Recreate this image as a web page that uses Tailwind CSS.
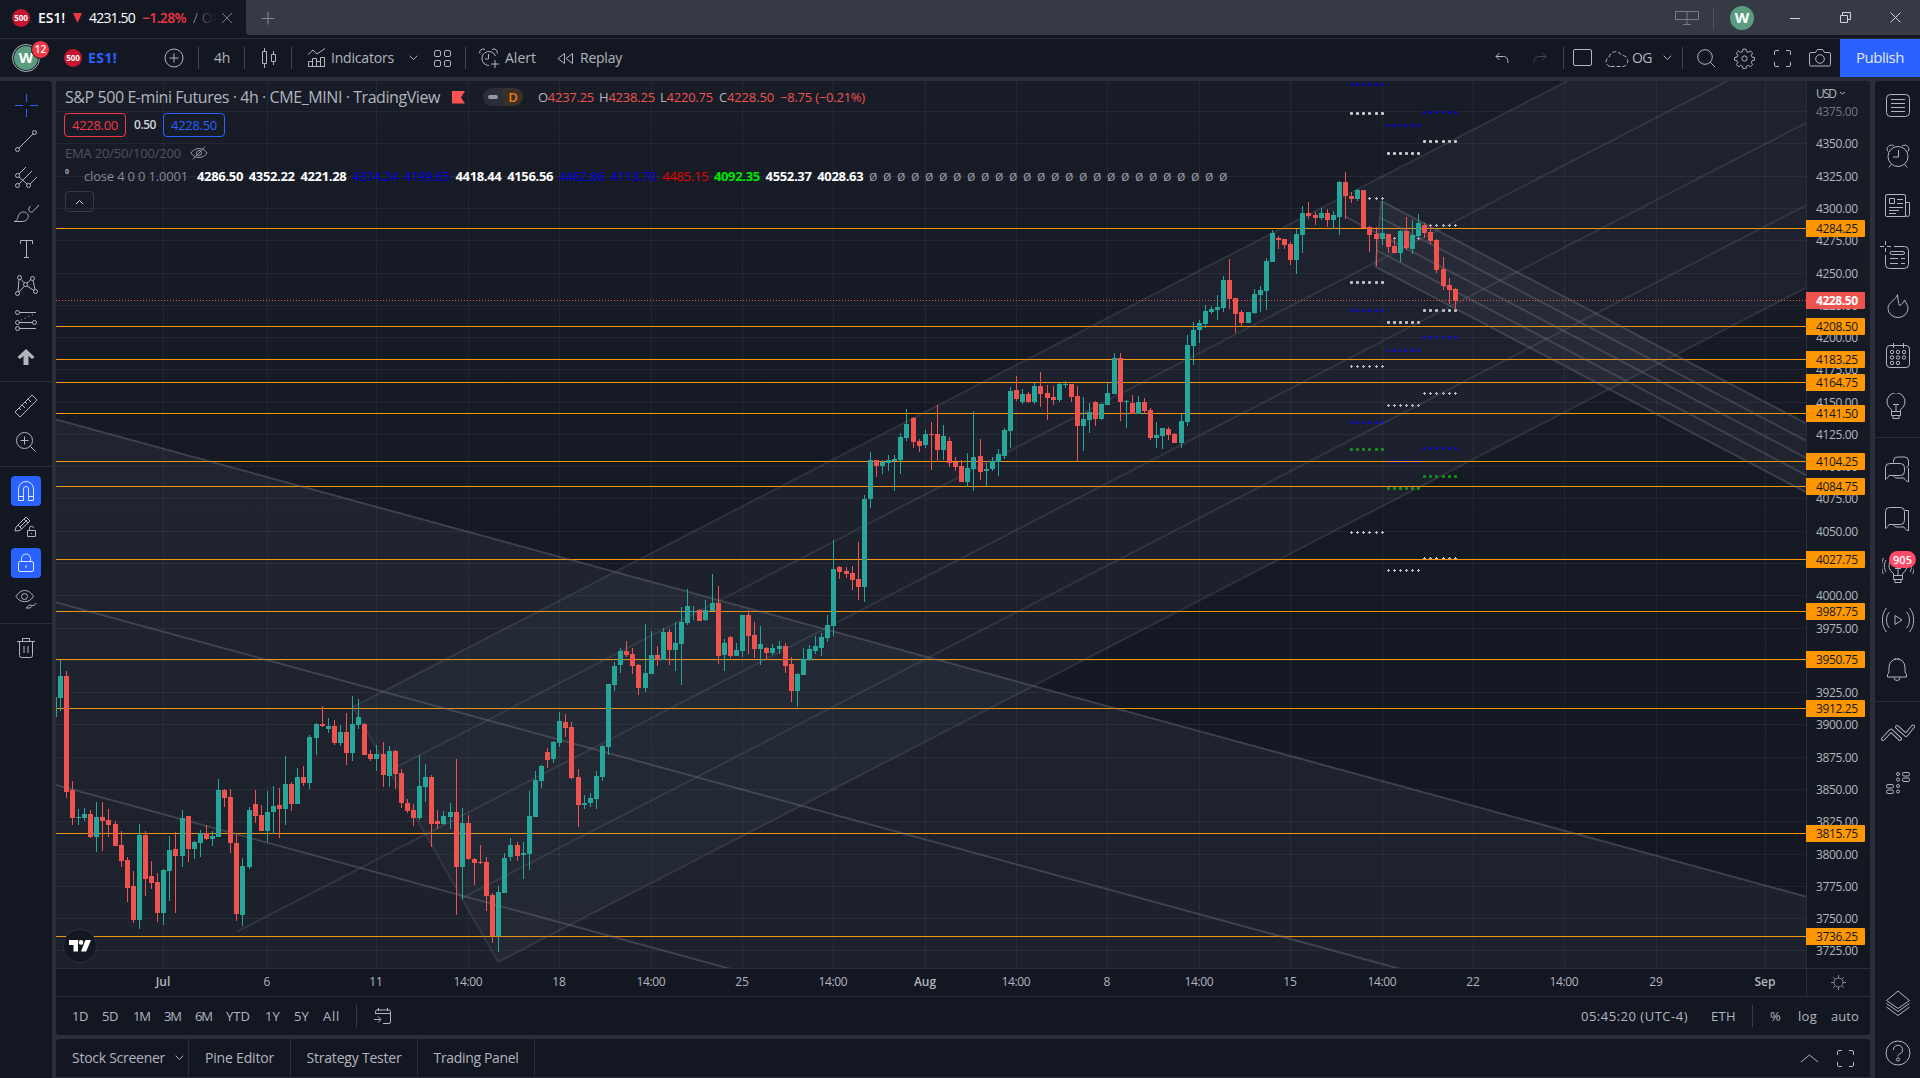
<!DOCTYPE html>
<html lang="en">
<head>
    <meta charset="UTF-8">
    <meta name="viewport" content="width=device-width, initial-scale=1.0">
    <title>ES1! 4231.50 −1.28%</title>
    <script src="https://cdn.jsdelivr.net/npm/@tailwindcss/browser@4"></script>
    <style>
        body {
            font-family: 'Trebuchet MS', 'Open Sans', sans-serif;
        }
        .ic {
            fill: none;
            stroke: currentColor;
            flex: none;
        }
        [data-w] {
            white-space: nowrap;
            flex: none;
        }
    </style>
</head>
<body class="w-[1920px] h-[1078px] overflow-hidden bg-[#2a2e39] text-[#b2b5be] text-sm flex flex-col">

    <!-- Window tabs -->
    <div class="h-[38px] bg-[#131722] flex items-start flex-none">
        <div class="w-[246px] h-[35px] pl-3 flex items-center flex-none text-[14px]">
            <span class="w-[18px] h-[18px] rounded-full bg-[#c8142f] text-white text-[8px] font-bold flex items-center justify-center flex-none">500</span>
            <span class="ml-2 text-white font-semibold" data-w="27">ES1!</span>
            <svg class="ml-[8px] flex-none" width="9" height="10"><path d="M0 0h9L4.500 10z" fill="#f23645"/></svg>
            <span class="ml-[7px] text-white font-medium" data-w="46">4231.50</span>
            <span class="ml-[7px] text-[#f23645] font-semibold" data-w="44">−1.28%</span>
            <span class="ml-[7px] w-[24px] overflow-hidden whitespace-nowrap bg-gradient-to-r from-[#868993] to-[#131722] bg-clip-text text-transparent">/ OG</span>
            <svg class="ic ml-[4px] text-[#787b86]" width="12" height="12"><path d="M1 1l10 10M11 1L1 11"/></svg>
        </div>
        <div class="flex-1 h-[35px] bg-[#363a45] rounded-bl flex items-center text-[#d1d4dc]">
            <svg class="ic ml-[15px] text-[#868993]" width="14" height="14"><path d="M7 .5v13M.5 7.500h13"/></svg>
            <svg class="ic ml-auto text-[#787b86]" width="24" height="16"><path d="M.5 1.500h23v8h-23zM12 1.500v13M8 14.500h8"/></svg>
            <div class="w-px h-[22px] bg-[#50535e] ml-[14px]"></div>
            <span class="ml-[16px] w-6 h-6 rounded-full bg-[#5b9c7f] text-white font-bold text-[15px] flex items-center justify-center">W</span>
            <svg class="ic ml-[36px]" width="10" height="10"><path d="M0 5.500h10"/></svg>
            <svg class="ic ml-[40px]" width="11" height="11"><path d="M.5 3.500h7v7h-7zM2.500 3V.5h8v7H8"/></svg>
            <svg class="ic ml-[39px] mr-[19px]" width="11" height="11"><path d="M.5.5l10 10M10.500.5l-10 10"/></svg>
        </div>
    </div>

    <!-- Top toolbar -->
    <div class="h-[39px] border-t border-[#2a2e39] bg-[#131722] flex items-center flex-none pl-3 text-[14px]">
        <div class="relative w-[28px] h-[28px] rounded-full border border-[#b2b5be] flex items-center justify-center flex-none">
            <span class="w-6 h-6 rounded-full bg-[#5b9c7f] text-white font-bold text-[15px] flex items-center justify-center">W</span>
            <span class="absolute -top-[5px] -right-[11px] w-[19px] h-[19px] rounded-full bg-[#f23645] border border-[#131722] text-white text-[10px] font-semibold flex items-center justify-center">12</span>
        </div>
        <span class="ml-6 w-[18px] h-[18px] rounded-full bg-[#c8142f] text-white text-[8px] font-bold flex items-center justify-center flex-none">500</span>
        <span class="ml-[6px] text-[#2962ff] font-bold" data-w="29">ES1!</span>
        <svg class="ic ml-[47px]" width="20" height="20"><circle cx="10" cy="10" r="9"/><path d="M10 5.500v9M5.500 10h9"/></svg>
        <div class="w-px h-[22px] bg-[#434651] ml-[14px]"></div>
        <span class="ml-[15px]" data-w="16">4h</span>
        <div class="w-px h-[22px] bg-[#434651] ml-[14px]"></div>
        <svg class="ic ml-[16px]" width="16" height="20"><path d="M1.500 3.500h4v12h-4zM3.500 0v3.500M3.500 15.500V20M10.500 6.500h4v7h-4zM12.500 3v3.500M12.500 13.500V17"/></svg>
        <div class="w-px h-[22px] bg-[#434651] ml-[14px]"></div>
        <svg class="ic ml-[15px]" width="20" height="20"><path d="M1 6.500l5-4.500 4 4 8-5.500M1.500 18.500v-5h4v5M5.500 18.500v-8h4v8M9.500 16.500v-3h4v5M13.500 18.500v-9h4v9zM1 18.500h17"/></svg>
        <span class="ml-[4px]" data-w="63">Indicators</span>
        <svg class="ic ml-[15px]" width="9" height="6"><path d="M.7.8l3.800 3.700L8.300.8"/></svg>
        <svg class="ic ml-[16px]" width="17" height="17"><rect x=".5" y=".5" width="6" height="6" rx="1.500"/><rect x="10.500" y=".5" width="6" height="6" rx="1.500"/><rect x=".5" y="10.500" width="6" height="6" rx="1.500"/><rect x="10.500" y="10.500" width="6" height="6" rx="1.500"/></svg>
        <div class="w-px h-[22px] bg-[#434651] ml-[14px]"></div>
        <svg class="ic ml-[13px]" width="21" height="21"><path d="M16.500 8A7 7 0 1 0 10 17.500M9.500 6v5H6M.8 5.500A3.500 3.500 0 0 1 6 1.500M13 1.500a3.500 3.500 0 0 1 5.200 4M16 12v8M12 16h8"/></svg>
        <span class="ml-[5px]" data-w="31">Alert</span>
        <svg class="ic ml-[21px]" width="17" height="13"><path d="M7.500 1.500v10L1 6.500zM15.500 1.500v10L9 6.500z" stroke-linejoin="round"/></svg>
        <span class="ml-[6px]" data-w="42">Replay</span>

        <svg class="ic ml-auto" width="14" height="12"><path d="M4.500 1L1 4.500 4.500 8M1 4.500h7.500c3 0 4.500 2 4.500 6.500"/></svg>
        <svg class="ic ml-[24px] text-[#434651]" width="14" height="12"><path d="M9.500 1L13 4.500 9.500 8M13 4.500H5.500C2.500 4.500 1 6.500 1 11"/></svg>
        <div class="w-px h-[22px] bg-[#434651] ml-[16px]"></div>
        <svg class="ic ml-[9px]" width="20" height="18"><rect x=".5" y=".5" width="18" height="16" rx="1.500"/></svg>
        <svg class="ic ml-[11px]" width="25" height="17"><path d="M6 16.500a5 5 0 0 1-.8-9.500A6.500 6.500 0 0 1 17.500 5.500 5.500 5.500 0 0 1 19 16.500z" stroke-dasharray="4 2"/></svg>
        <span class="ml-[3px]" data-w="20">OG</span>
        <svg class="ic ml-[11px]" width="9" height="6"><path d="M.7.8l3.800 3.700L8.300.8"/></svg>
        <div class="w-px h-[22px] bg-[#434651] ml-[10px]"></div>
        <svg class="ic ml-[14px]" width="19" height="19"><circle cx="8" cy="8" r="7.300"/><path d="M13.200 13.200l5 5"/></svg>
        <svg class="ic ml-[18px]" width="21" height="21" viewBox="0 0 28 28" stroke-width="1.300"><circle cx="14" cy="14" r="3.500"/><path d="M12 1.500h4l.8 3.300 2.300 1 2.900-1.800 2.800 2.800-1.800 2.900 1 2.300 3.300.8v3.400l-3.300.8-1 2.300 1.800 2.900-2.800 2.800-2.900-1.800-2.300 1-.8 3.300h-4l-.8-3.300-2.300-1L6 25l-2.800-2.800L5 19.300l-1-2.300-3.300-.8v-3.400L4 12l1-2.300-1.800-2.900L6 4l2.900 1.800 2.300-1z"/></svg>
        <svg class="ic ml-[19px]" width="17" height="17"><path d="M.5 5V2A1.500 1.500 0 0 1 2 .5h3M12 .5h3A1.500 1.500 0 0 1 16.500 2v3M16.500 12v3a1.500 1.500 0 0 1-1.500 1.500h-3M5 16.500H2A1.500 1.500 0 0 1 .5 15v-3"/></svg>
        <svg class="ic ml-[18px]" width="22" height="18"><path d="M2 3.500h4.500L8.500.5h5l2 3H20A1.500 1.500 0 0 1 21.500 5v10.500A1.500 1.500 0 0 1 20 17H2a1.500 1.500 0 0 1-1.500-1.500V5A1.500 1.500 0 0 1 2 3.500z"/><circle cx="11" cy="10" r="4.300"/></svg>
        <div class="ml-[9px] w-[80px] h-[38px] bg-[#2962ff] text-[#e3e8f8] text-[15px] flex items-center justify-center flex-none"><span data-w="48">Publish</span></div>
    </div>

    <div class="flex flex-1 pt-1 min-h-0">
        <!-- Drawing tools -->
        <div class="w-[52px] bg-[#131722] rounded-tr flex-none pt-[6px] flex flex-col">
            <div class="h-9 flex items-center justify-center text-[#2962ff]"><svg class="ic" width="24" height="24"><path d="M12.500 1v8M12.500 16v8M1 12.500h8M16 12.500h8"/></svg></div>
            <div class="h-9 flex items-center justify-center"><svg class="ic" width="24" height="24"><circle cx="3.500" cy="20.500" r="2"/><circle cx="20.500" cy="3.500" r="2"/><path d="M5 19L19 5"/></svg></div>
            <div class="h-9 flex items-center justify-center"><svg class="ic" width="24" height="24"><circle cx="3.500" cy="10.500" r="2"/><circle cx="3.500" cy="20.500" r="2"/><circle cx="14.500" cy="20.500" r="2"/><path d="M5 9l7-7M5 12l8 7M5 19L18 6M16 19l7-7"/></svg></div>
            <div class="h-9 flex items-center justify-center"><svg class="ic" width="26" height="24"><path d="M1 20.500c4-.5 3-3 5-7 1.500-2.500 5-3.500 7.500-1.500s2 5 .5 6.500c-2 2-4 2-6 2zM16 7c-1 4 2 5 4 3.500L26 4M16 7l1.500-2"/></svg></div>
            <div class="h-9 flex items-center justify-center"><svg class="ic" width="24" height="24"><path d="M6.500 7V3.500h12V7M12.500 3.500v17M10 20.500h5"/></svg></div>
            <div class="h-9 flex items-center justify-center"><svg class="ic" width="24" height="24"><circle cx="5.500" cy="4.500" r="2"/><circle cx="3.500" cy="20.500" r="2"/><circle cx="11.500" cy="11.500" r="2"/><circle cx="18.500" cy="5.500" r="2"/><circle cx="21.500" cy="18.500" r="2"/><path d="M5 6.500L4 18.500M6.500 6l4 4M13 10l4-3.500M19 7.500l2 9M5 19l5.500-6M13 13l7 4.500"/></svg></div>
            <div class="h-9 flex items-center justify-center"><svg class="ic" width="24" height="24"><circle cx="3.500" cy="3.500" r="2"/><circle cx="3.500" cy="13.500" r="2"/><circle cx="20.500" cy="13.500" r="2"/><circle cx="3.500" cy="19.500" r="2"/><path d="M5.500 3.500H22M5.500 13.500h13M5.500 19.500H22"/><path d="M7 11l13-6" stroke-dasharray="1 3"/></svg></div>
            <div class="h-9 flex items-center justify-center"><svg width="18" height="18" fill="currentColor"><path d="M9 1l8.500 8-2.500 2-3.500-3v9h-5V8L3 11 .5 9z"/></svg></div>
            <div class="h-px bg-[#2a2e39] my-[6px]"></div>
            <div class="h-9 flex items-center justify-center"><svg class="ic" width="24" height="24"><path d="M1 18L18 1l5 5L6 23zM5 14l2 2M8 11l3 3M11 8l2 2M14 5l3 3"/></svg></div>
            <div class="h-9 flex items-center justify-center"><svg class="ic" width="22" height="22"><circle cx="9.500" cy="9.500" r="8"/><path d="M15.500 15.500l5 5M9.500 5.500v8M5.500 9.500h8"/></svg></div>
            <div class="h-px bg-[#2a2e39] my-[6px]"></div>
            <div class="h-9 flex items-center justify-center"><span class="w-[30px] h-[30px] rounded bg-[#2962ff] flex items-center justify-center"><svg class="ic text-[#dbe3ff]" width="18" height="22"><path d="M1.500 20.500V9a7.500 7.500 0 0 1 15 0v11.500h-5V9a2.500 2.500 0 0 0-5 0v11.500zM1.500 16.500h5M11.500 16.500h5"/></svg></span></div>
            <div class="h-9 flex items-center justify-center"><svg class="ic" width="24" height="24"><path d="M1 16l1-4L12 2l4 4L6 15.500zM4 10l4 4M6 12l7-7M10 4l4 4M13.500 15.500h8v6h-8zM15.500 15.500v-2a2 2 0 0 1 4-.5M17.500 18v1"/></svg></div>
            <div class="h-9 flex items-center justify-center"><span class="w-[30px] h-[30px] rounded bg-[#2962ff] flex items-center justify-center"><svg class="ic text-[#dbe3ff]" width="18" height="20"><rect x="1.500" y="8.500" width="15" height="10" rx="1.500"/><path d="M4.500 8.500V5.500a4.500 4.500 0 0 1 9 0v3M9 12v3"/></svg></span></div>
            <div class="h-9 flex items-center justify-center"><svg class="ic" width="24" height="24"><path d="M2 9.500c4.500-8 13-8 17.500 0-4.500 7-13 7-17.500 0z"/><circle cx="10.500" cy="9.500" r="3"/><path d="M12 21c2 0 1.500-3 4-3s2 3-1 3zM18 17.500c0 2 2 1.500 4.500-1.500"/></svg></div>
            <div class="h-px bg-[#2a2e39] my-[6px]"></div>
            <div class="h-9 flex items-center justify-center"><svg class="ic" width="20" height="22"><path d="M1 4.500h18M6.500 4.500v-3h7v3M3.500 4.500v14a2 2 0 0 0 2 2h9a2 2 0 0 0 2-2v-14M8 9v7M12 9v7"/></svg></div>
        </div>

        <div class="w-[1814px] ml-1 flex flex-col flex-none">
            <!-- Chart -->
            <div class="relative h-[915px] rounded-t overflow-hidden bg-[#131722]">
                <svg id="chart" class="block" width="1814" height="915" viewBox="56 81 1814 915"></svg>

                <!-- Legend -->
                <div class="absolute top-[3px] left-[8px] text-[13px]">
                    <div class="h-[26px] flex items-center">
                        <span class="text-[16px] ml-px" data-w="375">S&amp;P 500 E-mini Futures · 4h · CME_MINI · TradingView</span>
                        <svg class="ml-[12px] flex-none" width="13" height="13"><path d="M0 0h13l-4 6.500 4 6H0z" fill="#ff5252"/></svg>
                        <div class="ml-[18px] w-[40px] h-[18px] rounded-full overflow-hidden flex flex-none">
                            <span class="w-1/2 bg-[#2a2e39] flex items-center justify-center"><i class="w-[10px] h-1 rounded-full bg-[#9598a1]"></i></span>
                            <span class="w-1/2 bg-[#3b2f2a] text-[#f57c00] font-semibold text-[13px] flex items-center justify-center">D</span>
                        </div>
                        <span class="ml-[15px]" data-w="56">O<b class="font-normal text-[#ef5350]">4237.25</b></span>
                        <span class="ml-[5px]" data-w="56">H<b class="font-normal text-[#ef5350]">4238.25</b></span>
                        <span class="ml-[5px]" data-w="53">L<b class="font-normal text-[#ef5350]">4220.75</b></span>
                        <span class="ml-[6px]" data-w="55">C<b class="font-normal text-[#ef5350]">4228.50</b></span>
                        <span class="ml-[6px] text-[#ef5350]" data-w="85">−8.75 (−0.21%)</span>
                    </div>
                    <div class="mt-[3px] h-[24px] flex items-center">
                        <span class="w-[62px] h-[24px] rounded border border-[#f23645] text-[#f23645] flex items-center justify-center"><span data-w="46">4228.00</span></span>
                        <span class="ml-[8px] text-[12px] text-[#d1d4dc] font-semibold" data-w="22">0.50</span>
                        <span class="ml-[7px] w-[62px] h-[24px] rounded border border-[#2962ff] text-[#2962ff] flex items-center justify-center"><span data-w="46">4228.50</span></span>
                    </div>
                    <div class="mt-[4px] h-[24px] flex items-center">
                        <span class="ml-px text-[#50535e]" data-w="116">EMA 20/50/100/200</span>
                        <svg class="ic ml-[9px] text-[#9598a1]" width="18" height="14"><path d="M1 7c3.500-6 12.500-6 16 0-3.500 6-12.500 6-16 0zM3 13.500L15 .5"/><circle cx="9" cy="7" r="2.500"/></svg>
                    </div>
                    <div id="values" class="h-[22px] flex items-center">
                        <span class="ml-px w-[19px] text-[11px] font-semibold -mt-1 flex-none">⁰</span>
                        <span class="text-[#868993] mr-[9px]" data-w="104">close 4 0 0 1.0001</span>
                    </div>
                    <div class="mt-[4px] ml-px w-[29px] h-[21px] rounded-sm border border-[#363a45] flex items-center justify-center"><svg class="ic text-[#d1d4dc]" width="9" height="6"><path d="M1 5l3.500-3.500L8 5"/></svg></div>
                </div>

                <!-- Logo -->
                <div class="absolute left-[7px] top-[848px] w-[34px] h-[34px] rounded-full bg-[#131722] border border-[#2a2e39] flex items-center justify-center">
                    <svg width="22" height="12" fill="#fff"><path d="M0 0h9v11.500H4.500V5H0z"/><circle cx="12" cy="2.400" r="2.300"/><path d="M16.500 0H22l-4.800 11.500H12z"/></svg>
                </div>
            </div>

            <!-- Ranges -->
            <div class="h-[39px] border-t border-[#2a2e39] bg-[#131722] rounded-b flex items-center pl-4 text-[13px] flex-none">
                <span data-w="16">1D</span>
                <span class="ml-[14px]" data-w="16">5D</span>
                <span class="ml-[15px]" data-w="17">1M</span>
                <span class="ml-[14px]" data-w="17">3M</span>
                <span class="ml-[14px]" data-w="17">6M</span>
                <span class="ml-[14px]" data-w="24">YTD</span>
                <span class="ml-[15px]" data-w="15">1Y</span>
                <span class="ml-[14px]" data-w="15">5Y</span>
                <span class="ml-[14px]" data-w="17">All</span>
                <div class="w-px h-[22px] bg-[#363a45] ml-[16px]"></div>
                <svg class="ic ml-[17px]" width="17" height="17"><path d="M1.500 6V3.500A1.500 1.500 0 0 1 3 2h12a1.500 1.500 0 0 1 1.500 1.500V14A1.500 1.500 0 0 1 15 15.500H9M1.500 5.500h15M4.500 0v3M13.500 0v3M0 11.500h6.500M4 8.500l3 3-3 3"/></svg>
                <span class="ml-auto" data-w="107">05:45:20 (UTC-4)</span>
                <span class="ml-[23px]" data-w="25">ETH</span>
                <div class="w-px h-[22px] bg-[#363a45] ml-[16px]"></div>
                <span class="ml-[17px]" data-w="12">%</span>
                <span class="ml-[16px]" data-w="19">log</span>
                <span class="ml-[14px] mr-[11px]" data-w="28">auto</span>
            </div>

            <!-- Bottom panels -->
            <div class="mt-1 mb-px flex-1 bg-[#131722] rounded-t flex items-center text-[14px]">
                <div class="w-[133px] h-full pl-4 border-r border-[#2a2e39] flex items-center"><span data-w="93">Stock Screener</span><svg class="ic ml-[10px]" width="9" height="6"><path d="M.7.8l3.800 3.700L8.300.8"/></svg></div>
                <div class="w-[102px] h-full border-r border-[#2a2e39] flex items-center justify-center"><span data-w="69">Pine Editor</span></div>
                <div class="w-[127px] h-full border-r border-[#2a2e39] flex items-center justify-center"><span data-w="95">Strategy Tester</span></div>
                <div class="w-[117px] h-full border-r border-[#2a2e39] flex items-center justify-center"><span data-w="85">Trading Panel</span></div>
                <svg class="ic ml-auto" width="19" height="9"><path d="M1 8l8.500-7L18 8"/></svg>
                <svg class="ic ml-[18px] mr-[16px]" width="17" height="17"><path d="M.5 5V2A1.500 1.500 0 0 1 2 .5h3M12 .5h3A1.500 1.500 0 0 1 16.500 2v3M16.500 12v3a1.500 1.500 0 0 1-1.500 1.500h-3M5 16.500H2A1.500 1.500 0 0 1 .5 15v-3"/></svg>
            </div>
        </div>

        <!-- Widget bar -->
        <div class="w-[45px] ml-[5px] bg-[#131722] rounded-tl flex-none flex flex-col">
            <div class="h-[50px] flex items-center justify-center"><svg class="ic" width="24" height="24"><rect x=".5" y=".5" width="23" height="22" rx="4"/><path d="M5 5.500h14M5 9.500h14M5 13.500h14M5 17.500h14"/></svg></div>
            <div class="h-[50px] flex items-center justify-center"><svg class="ic" width="26" height="26"><circle cx="13" cy="13.500" r="10"/><path d="M13.500 7v7H8M3 8.500C0 5 5 0 9 3M23 8.500C26 5 21 0 17 3M6 21.500l-2 3M20 21.500l2 3"/></svg></div>
            <div class="h-[50px] flex items-center justify-center"><svg class="ic" width="26" height="24"><path d="M.5 22V2A1.500 1.500 0 0 1 2 .5h17A1.500 1.500 0 0 1 20.500 2v20.500h-19a1 1 0 0 1-1-1zM21 8.500h3.500v12a2 2 0 0 1-4 0M4.500 4.500h5v5h-5zM12 5.500h6M12 9.500h6M4 13.500h14M4 16.500h10M4 19.500h7"/></svg></div>
            <div class="h-[50px] flex items-center justify-center"><svg class="ic mr-[5px] -mt-[2px]" width="30" height="28"><path d="M5.500 0v4M5.500 7v4M0 5.500h4M7 5.500h4M14 5.500h10.500a4 4 0 0 1 4 4v14a4 4 0 0 1-4 4h-15a4 4 0 0 1-4-4V14M10 17.500h8M10 22.500h8M21 17.500h4M21 22.500h4"/><rect x="10" y="10.500" width="14.500" height="3" rx="1.500"/></svg></div>
            <div class="h-[50px] flex items-center justify-center"><svg class="ic" width="24" height="26"><path d="M11.500 1.500C11 6 2 9 2 15.500a10 9 0 0 0 20 0c0-3-1.500-4.500-3.500-8.500-1 2.500-2 4-5 5.500-1-2-1.500-6-2-11z"/></svg></div>
            <div class="h-[50px] flex items-center justify-center"><svg class="ic" width="24" height="26"><rect x=".5" y="2.500" width="23" height="22" rx="3.500"/><path d="M7.500 0v5M17.500 0v5"/><g><circle cx="6" cy="9" r="1.700"/><circle cx="12" cy="9" r="1.700"/><circle cx="18" cy="9" r="1.700"/><circle cx="6" cy="14.500" r="1.700"/><circle cx="12" cy="14.500" r="1.700"/><circle cx="18" cy="14.500" r="1.700"/><circle cx="6" cy="20" r="1.700"/><circle cx="12" cy="20" r="1.700"/></g></svg></div>
            <div class="h-[50px] flex items-center justify-center"><svg class="ic mr-[3px]" width="20" height="27"><path d="M5.500 18.500v-2A9 9 0 1 1 14.500 16.500v2zM5.500 18.500v4h9v-4M7 22.500v3h6v-3M7 11.500h6M10 11.500v7"/></svg></div>
            <div class="h-px bg-[#2a2e39] mt-[6px] mb-[7px]"></div>
            <div class="h-[50px] flex items-center justify-center"><svg class="ic" width="25" height="28"><path d="M8.500 6.500V5a4 4 0 0 1 4-4h7a4 4 0 0 1 4 4v4a3 3 0 0 1-2 2.500M4.500 7.500h11a4 4 0 0 1 4 4v4a4 4 0 0 1-4 4H4c-1 2-2 3-3.500 4v-12a4 4 0 0 1 4-4zM9 19.500c0 1.500 1 2.500 3 2.500h7c1 2 3 3.500 4.500 4V12"/></svg></div>
            <div class="h-[50px] flex items-center justify-center"><svg class="ic -mt-[3px]" width="25" height="25"><path d="M4.500 1.500h11a4 4 0 0 1 4 4v9a4 4 0 0 1-4 4H4c-1 2-2 3-3.500 4v-17a4 4 0 0 1 4-4zM20 4.500h3.500V25c-2-.5-3.500-2-4.500-4h-7c-2 0-3-1-3-2.500"/></svg></div>
            <div class="relative h-[50px] flex items-center justify-center"><svg class="ic" width="32" height="28"><path d="M11.500 19.500v-2A9 9 0 1 1 20.500 17.500v2zM11.500 19.500v4h9v-4M13 23.500v3h6v-3M13 12.500h6M16 12.500v7M4 4c-2 3-2 9 0 12M1.500 2c-2.500 4-2.500 12 0 16M28 4c2 3 2 9 0 12M30.500 2c2.500 4 2.500 12 0 16"/></svg>
                <span class="absolute top-[6px] left-[14px] w-[27px] h-[17px] rounded-full bg-[#ff4a68] text-white text-[11px] font-semibold flex items-center justify-center">905</span></div>
            <div class="h-[50px] flex items-center justify-center"><svg class="ic" width="32" height="26"><path d="M13 8.500v9l7-4.500zM7.500 5c-4 4-4 12 0 16M4.500 1c-5.500 6-5.500 18 0 24M24.500 5c4 4 4 12 0 16M27.500 1c5.500 6 5.500 18 0 24"/></svg></div>
            <div class="h-[50px] flex items-center justify-center"><svg class="ic mr-[2px]" width="22" height="24"><path d="M1.500 16.500c2-1.500 1.500-5 1.500-7.500a8 8 0 0 1 16 0c0 2.500-.5 6 1.500 7.500v2.500h-19zM8 19.500a3 3 0 0 0 6 0M9 1.500a2 2 0 0 1 4 0"/></svg></div>
            <div class="h-px bg-[#2a2e39] my-[6px]"></div>
            <div class="h-[50px] flex items-center justify-center"><svg class="ic" width="34" height="20"><path d="M2 16l8-8.500 9 8.500" stroke-width="4" stroke-linecap="round" stroke-linejoin="round"/><path d="M16 4l9 8 7-8.500" stroke-width="4" stroke-linecap="round" stroke-linejoin="round"/><g stroke="#131722" stroke-width="2" stroke-linecap="round" stroke-linejoin="round"><path d="M2 16l8-8.500 9 8.500M16 4l9 8 7-8.500"/></g></svg></div>
            <div class="h-[50px] flex items-center justify-center"><svg class="ic" width="24" height="24"><circle cx="12" cy="3" r="1.500"/><circle cx="12" cy="8.500" r="1.500"/><circle cx="12" cy="15" r="1.500"/><circle cx="12" cy="20.500" r="1.500"/><rect x="16.500" y="1.500" width="7" height="3.500" rx="1.500"/><rect x="16.500" y="7" width="7" height="3.500" rx="1.500"/><rect x=".5" y="13.500" width="7" height="3.500" rx="1.500"/><rect x=".5" y="19" width="7" height="3.500" rx="1.500"/></svg></div>
            <div class="mt-auto h-[50px] flex items-center justify-center"><svg class="ic" width="24" height="27"><path d="M12 1l11.500 9.500L12 18.500.5 10.500zM.5 13.500L12 21.500l11.500-8M.5 17L12 25.500 23.500 17"/></svg></div>
            <div class="h-[50px] flex items-center justify-center"><svg class="ic" width="26" height="26"><circle cx="13" cy="13" r="12"/><path d="M8.500 10a4.500 4.500 0 1 1 6 4c-1 .5-1.500 1-1.500 2.500"/><circle cx="13" cy="19.500" r="1.600"/></svg></div>
        </div>
    </div>

    <script>
        // each candle: direction, high, body top, body bottom, low
        const candles = `u697,697,717,717 u660,676,698,711 d671,676,792,798 d781,790,818,825 u809,817,818,825 u808,814,818,821 d810,814,837,838 u802,817,837,852
            d802,817,821,851 d809,820,825,837 d821,824,846,846 d831,845,861,867 d857,860,888,902 d871,886,920,923 u824,835,920,929 d831,835,879,896
            d861,876,883,889 d873,882,913,922 u869,870,913,925 u836,850,871,901 d832,849,856,913 u810,818,856,867 d816,816,849,862 u841,842,849,859
            u830,833,843,857 d825,833,839,840 u831,836,839,846 u779,790,837,837 d789,790,798,807 d789,797,843,853 d835,843,914,921 u858,866,915,926
            u807,810,867,869 d790,804,816,823 d805,815,831,831 u791,812,831,842 u786,806,812,834 d788,805,809,838 u756,784,809,825 d782,784,804,811
            u768,777,804,804 d766,777,783,786 u735,737,783,789 u723,724,738,755 d706,724,726,727 u718,726,729,733 d720,726,743,745 u725,732,743,746
            d713,732,753,765 u696,724,753,761 u699,717,725,729 d723,724,755,755 d750,754,759,761 u745,754,759,771 d742,754,775,787 u746,751,776,787
            d750,751,774,789 d769,773,803,808 d799,803,811,813 d804,810,818,826 u755,786,818,820 u764,777,787,802 d775,777,824,847 d810,821,824,829
            u811,816,824,825 u803,812,817,829 d759,812,867,915 u808,823,867,899 d815,823,859,860 d858,859,863,885 d845,862,863,864 d857,862,896,911
            d893,895,936,943 u886,892,936,952 u853,858,893,893 u838,845,857,861 d842,845,856,861 u842,853,855,879 u791,816,854,870 u771,780,817,817
            u765,766,781,788 d748,752,760,768 u741,742,759,763 u712,721,743,747 d714,722,728,737 d722,727,778,779 d769,777,805,827 u795,803,805,809
            u793,798,803,807 u771,776,799,809 u745,746,777,781 u684,684,747,755 u662,666,685,691 u648,651,665,673 d641,651,655,657 d648,654,666,674
            d664,665,688,695 u624,673,688,692 u631,655,674,674 d646,655,660,666 u628,632,660,660 d629,632,650,665 u622,643,650,671 u607,622,644,685
            u589,606,623,625 u606,611,612,620 d609,610,621,621 u600,610,620,621 u574,603,611,611 d586,603,656,664 u639,643,655,671 d636,637,656,658
            u643,650,656,656 u615,615,651,657 d610,615,636,654 d622,635,649,658 u626,644,649,665 d647,648,653,660 u644,648,653,655 u641,646,649,654
            d643,646,666,673 d657,664,691,702 u673,674,691,707 u648,659,675,675 u645,649,660,661 u636,646,651,654 u633,637,648,656 u615,625,638,642
            u540,569,626,636 d566,567,572,579 d567,571,574,578 d566,573,580,590 d542,579,587,600 u495,499,587,602 u452,460,499,508 d460,460,466,477
            u460,462,466,474 u455,460,463,471 u455,459,461,491 u433,437,460,474 u409,424,438,441 d417,418,442,448 d439,441,446,452 u430,434,445,448
            d422,434,435,470 d405,434,450,462 u425,436,450,460 d437,441,463,467 d457,462,467,471 d460,466,482,482 u453,468,482,487 u411,457,469,491
            d439,456,472,480 u463,469,471,486 u457,461,469,471 u449,454,462,476 u428,430,456,459 u387,391,431,448 d376,390,399,401 u389,394,402,404
            d392,394,402,403 u383,386,402,404 d372,386,394,407 d385,393,398,420 d386,397,400,405 u383,384,400,402 u381,384,385,388 d384,384,397,402
            d386,396,426,461 u397,419,426,451 u403,412,420,433 d401,402,419,426 u403,404,419,420 u383,393,405,405 u353,358,394,394 d353,358,402,421
            u400,401,402,428 d395,403,414,414 u396,402,414,414 d398,402,411,414 d408,410,438,440 u422,435,438,448 u428,428,436,449 d427,429,435,440
            d433,434,443,443 u414,421,443,448 u335,345,422,426 u322,330,346,365 u320,323,330,343 u305,311,324,328 u306,309,312,314 u295,307,310,320
            u276,280,308,312 d259,280,299,309 d298,298,314,333 d310,312,323,326 u312,312,323,323 u289,294,313,314 u286,290,295,312 u258,261,291,310
            u230,233,262,262 d236,238,240,249 d239,239,245,249 d242,244,260,265 u229,234,260,274 u206,213,235,253 d202,213,216,219 d212,215,218,225
            u208,213,218,220 d209,213,220,227 u211,215,220,229 u181,182,217,235 d172,182,196,219 d192,196,199,203 u189,190,199,201 d190,190,228,228
            d226,227,235,252 d227,234,239,266 u201,233,239,245 d234,234,247,253 d239,246,253,253 u230,231,253,262 d217,231,248,250 u220,235,249,254
            u214,223,236,238 d223,225,233,238 d227,232,241,244 d239,240,270,273 d257,269,286,290 d278,285,290,304 d288,289,301,310`.trim().split(/\s+/);

        // horizontal levels: price, y
        const levels = [[4284.25, 228], [4208.50, 326], [4183.25, 359], [4164.75, 382], [4141.50, 413], [4104.25, 461], [4084.75, 486],
            [4027.75, 559], [3987.75, 611], [3950.75, 659], [3912.25, 708], [3815.75, 833], [3736.25, 936]];
        const times = [[163, 'Jul'], [267, '6'], [376, '11'], [468, '14:00'], [559, '18'], [651, '14:00'], [742, '25'], [833, '14:00'], [925, 'Aug'],
            [1016, '14:00'], [1107, '8'], [1199, '14:00'], [1290, '15'], [1382, '14:00'], [1473, '22'], [1564, '14:00'], [1656, '29'], [1765, 'Sep']];

        // pivots: y, kind, first bar, skipped bars
        const pivots = [
            [84, 'blue', 212], [113, 'big', 212], [198, 'small', 212, [212, 213, 214]], [282, 'big', 212], [310, 'blue', 212], [366, 'small', 212], [422, 'blue', 212], [449, 'green', 212], [532, 'small', 212],
            [125, 'blue', 218], [153, 'big', 218], [238, 'small', 218, [218, 220, 221, 222]], [322, 'big', 218], [350, 'blue', 218], [405, 'small', 218], [461, 'blue', 218], [488, 'green', 218], [570, 'small', 218],
            [112, 'blue', 224], [141, 'big', 224], [225, 'small', 224, [224]], [310, 'big', 224], [337, 'blue', 224], [393, 'small', 224], [448, 'blue', 224], [476, 'green', 224], [558, 'small', 224]
        ];

        const barX = i => Math.floor(60.214 + 6.09162 * i);
        const priceY = p => Math.round(143.4 + (4350 - p) * 1.2912);
        const rect = (x, y, w, h, fill) => `<rect x="${x}" y="${y}" width="${w}" height="${h}" fill="${fill}"/>`;
        const line = (x1, y1, x2, y2, c) => `<path d="M${x1} ${y1}L${x2} ${y2}" stroke="${c}" stroke-width="2" fill="none"/>`;
        const tag = (p, y, bg, fg, w) => `<path d="M1806 ${y - 8}h58a1 1 0 0 1 1 1v15a1 1 0 0 1 -1 1h-58z" fill="${bg}"/>
            <text x="1816" y="${y + 5}" fill="${fg}" font-weight="${w}" textLength="42">${p.toFixed(2)}</text>`;

        let s = `<defs>
            <linearGradient id="bg" x1="0" y1="0" x2="0" y2="1"><stop offset="0" stop-color="#181c27"/><stop offset="1" stop-color="#131722"/></linearGradient>
            <clipPath id="pane"><rect x="56" y="81" width="1750" height="887"/></clipPath></defs>`;
        s += rect(56, 81, 1814, 887, 'url(#bg)') + '<g clip-path="url(#pane)">';
        for (let p = 4375; p >= 3725; p -= 25) s += rect(56, priceY(p), 1750, 1, '#f0f3fa0f');
        times.forEach(t => s += rect(t[0], 81, 1, 887, '#f0f3fa0f'));

        pivots.forEach(([y, kind, from, skip = []]) => {
            for (let i = from; i < from + 6; i++) {
                if (skip.includes(i)) continue;
                const x = barX(i);
                if (kind === 'small') s += rect(x - 1, y, 3, 1, '#c4c6cb') + rect(x, y - 1, 1, 3, '#c4c6cb');
                if (kind === 'big') s += `<rect x="${x - 1}" y="${y - 1}" width="3" height="3" rx="1" fill="#c9cacd"/>`;
                if (kind === 'blue') s += rect(x - 1, y - 1, 3, 3, '#0808b4');
                if (kind === 'green') s += `<rect x="${x - 1}" y="${y - 1}" width="3" height="3" rx=".8" fill="#0f8f14"/>`;
            }
        });
        levels.forEach(l => s += rect(56, l[1], 1750, 1, '#ff9800'));

        // descending pitchfork
        s += '<path d="M56 419.500L1806 896.500V968H56z" fill="#787b86" fill-opacity=".1"/>';
        [419.5, 602.5, 785].forEach(y => s += line(56, y, 1806, y + 477, '#787b8660'));

        // ascending pitchfork
        const k = 0.5155;
        s += `<path d="M353 707L1806 ${707 - k * 1453}V${962 - k * 1308}L498 962z" fill="#787b86" fill-opacity=".08"/>`;
        s += line(353, 707, 498, 962, '#787b8633');
        [[353, 707], [389.2, 770.8], [237, 931.7], [461.8, 898.2], [498, 962]].forEach(a => s += line(a[0], a[1], 1806, a[1] - k * (1806 - a[0]), '#787b8638'));

        // short pitchfork
        s += '<path d="M1381.300 201L1806 423.400V492.300L1375.300 266.700z" fill="#787b86" fill-opacity=".1"/>';
        s += line(1381.3, 201, 1375.3, 266.7, '#787b8650');
        [[1381.3, 201], [1379.8, 217.4], [1345.3, 216.6], [1376.8, 250.3], [1375.3, 266.7]].forEach(a => s += line(a[0], a[1], 1806, a[1] + 0.5236 * (1806 - a[0]), '#787b8658'));

        candles.forEach((c, n) => {
            const [h, t, b, l] = c.slice(1).split(',').map(Number);
            const x = n ? barX(n - 1) : 54;
            const color = c[0] === 'u' ? '#26a69a' : '#ef5350';
            s += rect(x, h, 1, l - h, color) + rect(x - 2, t, 5, b - t, color);
        });
        s += '<path d="M56 300.500H1806" stroke="#ef5350" stroke-dasharray="1 2"/></g>';

        // axes
        s += rect(1806, 81, 1, 915, '#2a2e39') + rect(56, 968, 1814, 1, '#2a2e39');
        s += '<g font-size="12" fill="#b2b5be">';
        for (let p = 4375; p >= 3725; p -= 25) s += `<text x="1816" y="${priceY(p) + 5}" textLength="42" ${p === 4375 ? 'opacity=".6"' : ''}>${p.toFixed(2)}</text>`;
        times.forEach(([x, t]) => s += `<text x="${x}" y="986" text-anchor="middle" ${t.includes(':') ? 'textLength="29"' : ''} ${/[a-z]/.test(t) ? 'font-weight="600"' : ''}>${t}</text>`);
        levels.forEach(([p, y]) => s += tag(p, y, '#ff9800', '#131722', 400));
        s += tag(4228.5, 300, '#ef5350', '#fff', 700);
        s += '<text x="1816" y="98" textLength="21">USD</text><path d="M1840 92l2.500 2 2.500-2" stroke="#b2b5be" fill="none"/></g>';
        s += '<g stroke="#868993" fill="none"><circle cx="1838.500" cy="982.500" r="4.500"/><path d="M1838.500 975v3M1838.500 987v3M1831 982.500h3M1843 982.500h3M1833.200 977.200l2 2M1841.800 985.800l2 2M1843.800 977.200l-2 2M1835.200 985.800l-2 2"/></g>';
        document.getElementById('chart').innerHTML = s;

        // indicator values in the legend
        const values = [['4286.50', '#fff'], ['4352.22', '#fff'], ['4221.28', '#fff'], ['4374.24', '#0000e6'], ['4199.65', '#0000e6'], ['4418.44', '#fff'], ['4156.56', '#fff'],
            ['4462.86', '#0000e6'], ['4113.70', '#0000e6'], ['4485.15', '#e60000'], ['4092.35', '#00e600'], ['4552.37', '#fff'], ['4028.63', '#fff']];
        let v = '';
        values.forEach(([n, c]) => v += `<span class="w-[51.7px] flex-none"><span class="${c === '#0000e6' || c === '#e60000' ? 'font-normal' : 'font-bold'}" style="color:${c}" data-w="46">${n}</span></span>`);
        for (let i = 0; i < 26; i++) v += '<span class="w-[14px] text-[14px] text-[#9598a1] flex-none">ø</span>';
        document.getElementById('values').innerHTML += v;

        // keep label widths stable whichever font is picked
        function fitLabels() {
            document.querySelectorAll('[data-w]').forEach(el => {
                el.style.letterSpacing = '0px';
                const gap = (el.dataset.w - el.getBoundingClientRect().width) / el.textContent.length;
                el.style.letterSpacing = gap.toFixed(3) + 'px';
            });
        }
        fitLabels();
        window.addEventListener('load', () => {
            fitLabels();
            document.fonts.ready.then(fitLabels);
            setTimeout(fitLabels, 50);
        });
    </script>
</body>
</html>
